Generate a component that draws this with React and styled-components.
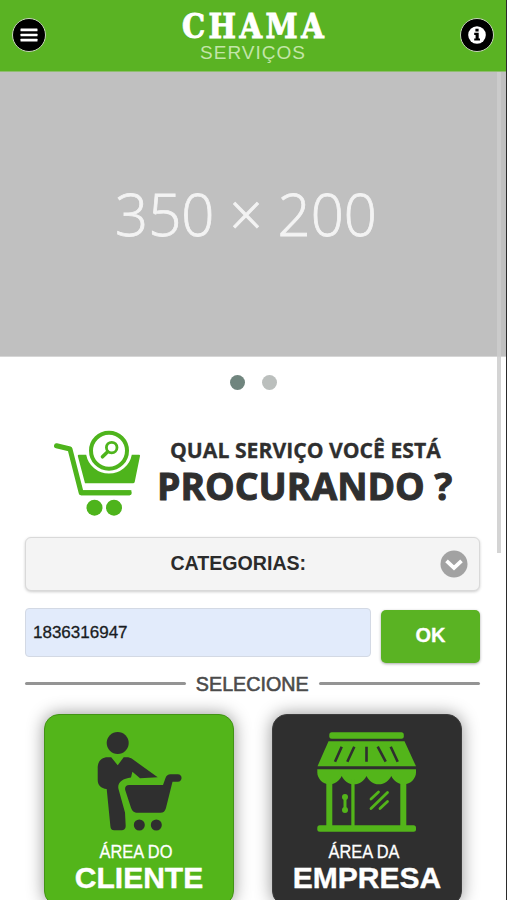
import React from "react";
import styled, { createGlobalStyle } from "styled-components";

const GlobalStyle = createGlobalStyle`
  * {
    box-sizing: border-box;
  }

  body {
    margin: 0;
    overflow: hidden;
    background: #fff;
    font-family: "Liberation Sans", Arial, sans-serif;
  }
`;

const Screen = styled.div`
  position: relative;
  height: 900px;
  overflow: hidden;
  border-right: 1px solid #2b2b2b;
`;

const Header = styled.header`
  height: 72px;
  padding: 0 12px 1px;
  display: flex;
  align-items: center;
  justify-content: space-between;
  background-color: #5ab323;
  border-bottom: 1px solid #8fbd70;
`;

const RoundButton = styled.button`
  width: 34px;
  height: 34px;
  padding: 0;
  display: flex;
  align-items: center;
  justify-content: center;
  border: 1px solid #c5d8b6;
  border-radius: 50%;
  background-color: #000;
`;

const Brand = styled.div`
  height: 70px;
  padding: 11px 1px 0 0;
  display: flex;
  flex-direction: column;
  align-items: center;
`;

// text whose glyphs are squeezed or widened sideways
const Label = styled.span`
  display: block;
  white-space: nowrap;
  font-family: ${(props) => props.$font || `"Liberation Sans", sans-serif`};
  font-size: ${(props) => props.$size}px;
  font-weight: ${(props) => props.$weight || 400};
  line-height: ${(props) => props.$line}px;
  letter-spacing: ${(props) => props.$spacing || 0}px;
  margin-right: -${(props) => props.$spacing || 0}px;
  color: ${(props) => props.$color || "#fff"};
  transform: scaleX(${(props) => props.$stretch || 1});
  transform-origin: ${(props) => props.$origin || "center"};
  -webkit-text-stroke: ${(props) => props.$stroke || 0}px currentColor;
`;

const Slide = styled.div`
  height: 285px;
  padding-right: 14px;
  display: flex;
  align-items: center;
  justify-content: center;
  background-color: #c0c0c0;
  border-bottom: 1px solid #d6d6d6;
`;

const Dots = styled.div`
  height: 51px;
  display: flex;
  align-items: center;
  justify-content: center;
  gap: 17px;
`;

const Dot = styled.span`
  width: 15px;
  height: 15px;
  border-radius: 50%;
  background-color: ${(props) => (props.$active ? "#70857e" : "#bbbfbd")};
`;

const Question = styled.section`
  height: 129px;
  padding: 22px 0 0 53px;
  display: flex;
`;

const QuestionText = styled.div`
  padding: 4px 0 0 16px;
`;

const FirstLine = styled.div`
  padding-left: 13px;
`;

const Form = styled.main`
  padding: 0 26px 0 25px;
`;

const Select = styled.button`
  width: 100%;
  height: 54px;
  padding: 0 11px;
  display: flex;
  align-items: center;
  border: 1px solid #d9d9d9;
  border-radius: 6px;
  background-color: #f4f4f4;
  box-shadow: 0 1px 3px rgba(0, 0, 0, 0.2);
`;

const SelectText = styled.div`
  flex: 1;
  padding-bottom: 2px;
  display: flex;
  justify-content: center;
`;

const Row = styled.div`
  margin-top: 17px;
  display: flex;
  align-items: flex-start;
  gap: 10px;
`;

const Input = styled.input`
  width: 346px;
  height: 49px;
  padding: 0 7px;
  border: 1px solid #d3d9e4;
  border-radius: 4px;
  outline: none;
  background-color: #e2ebfb;
  color: #191c22;
  font-family: "Liberation Sans", sans-serif;
  font-size: 17px;
  -webkit-text-stroke: 0.3px #191c22;
`;

const OkButton = styled.button`
  flex: 1;
  height: 53px;
  margin-top: 2px;
  padding: 0 0 3px;
  border: 0;
  border-radius: 5px;
  background-color: #5ab323;
  box-shadow: 0 1px 3px rgba(0, 0, 0, 0.35);
`;

const Divider = styled.div`
  height: 42px;
  padding-bottom: 1px;
  display: flex;
  align-items: center;
  gap: 9px;

  &::before,
  &::after {
    content: "";
    flex: 1;
    height: 3px;
    border-radius: 2px;
    background-color: #949494;
  }
`;

const Cards = styled.div`
  padding: 9px 18px 0 19px;
  display: flex;
  justify-content: space-between;
`;

const Card = styled.a`
  width: 190px;
  height: 192px;
  padding-top: 17px;
  display: flex;
  flex-direction: column;
  align-items: center;
  border: 1px solid ${(props) => (props.$dark ? "#3c3c3c" : "#429315")};
  border-radius: 15px;
  background-color: ${(props) => (props.$dark ? "#2f2f2f" : "#53b51a")};
  box-shadow: 0 0 17px rgba(0, 0, 0, 0.42);

  svg {
    flex: none;
    margin-bottom: 10px;
  }
`;

const CardCaption = styled.div`
  padding-right: 5px;
`;

const Scrollbar = styled.div`
  position: absolute;
  top: 72px;
  right: 5px;
  width: 4px;
  height: 481px;
  background-color: rgba(205, 205, 205, 0.85);
`;

function MenuIcon() {
  return (
    <svg width="18" height="14" viewBox="0 0 18 14" fill="#fff">
      <rect x="0.5" y="0.6" width="17" height="2.6" rx="0.5" />
      <rect x="0.5" y="5.7" width="17" height="2.6" rx="0.5" />
      <rect x="0.5" y="10.8" width="17" height="2.6" rx="0.5" />
    </svg>
  );
}

function InfoIcon() {
  return (
    <svg width="18" height="18" viewBox="0 0 18 18">
      <circle cx="9" cy="9" r="8.8" fill="#fff" />
      <path d="M7.4 2.8h3.2v2.7H7.4zM6.2 6.8h4.5v5.6h1.3v2.1H6.2v-2.1h1.4V8.9H6.2z" />
    </svg>
  );
}

function SearchCartIcon() {
  return (
    <svg width="88" height="88" viewBox="0 0 88 88" fill="none">
      <path
        d="M3.500 15.800l13.500 3.200 11.200 43.800h48"
        stroke="#4eb41c"
        strokeWidth="5"
        strokeLinecap="round"
        strokeLinejoin="round"
      />
      <path d="M28 60.300h50.500l-1.500 5H28z" fill="#4eb41c" />
      <path
        d="M26 24.700h7.200a23.200 23.200 0 0 0 45.600 0H86q1.300 0 1 1.300l-5.300 26q-.4 1.300-1.700 1.300H32L24.800 26q-.2-1.300 1.200-1.300z"
        fill="#4eb41c"
      />
      <circle cx="56" cy="20.700" r="18" fill="#fff" stroke="#4eb41c" strokeWidth="4" />
      <circle cx="58.700" cy="17.600" r="5.300" stroke="#4eb41c" strokeWidth="2.800" />
      <path d="M54.700 21.800l-5.200 5" stroke="#4eb41c" strokeWidth="3.600" strokeLinecap="round" />
      <circle cx="41.500" cy="77.700" r="8" fill="#4eb41c" />
      <circle cx="61" cy="77.700" r="8" fill="#4eb41c" />
    </svg>
  );
}

function ChevronIcon() {
  return (
    <svg width="28" height="28" viewBox="0 0 28 28" fill="none">
      <circle cx="14" cy="14" r="13.500" fill="#a2a2a2" />
      <path d="M6.500 10.800l7.500 7 7.500-7" stroke="#fff" strokeWidth="3.800" />
    </svg>
  );
}

function ClientIcon() {
  return (
    <svg width="86" height="100" viewBox="0 0 86 100" fill="#2f2f2f">
      <circle cx="21.700" cy="11" r="11" />
      <path d="M1.700 36c0-7 4-10.700 10-10.700h3.500l6.500 8 6-8h3c2 0 4 .5 6 2L61.700 45.300 44 46.200l-7.600-6.500L35 45.500c-9 1-14 5.500-12.500 11.500l6.500 23.500.7 13.500c0 3-2 4.300-4 4.300h-7.500c-2.500 0-3.600-1.500-3.800-4L10.700 57C5 56.500 1.700 53 1.700 48z" />
      <path d="M29.200 58c-.6-3 .8-5 4-5H67l2.500-7c1-2.500 2.500-3.700 5-3.700h7.300c5 0 5 7.400 0 7.400h-5.300l-6.600 26.500c-1 3.300-2.500 4.600-5.500 4.600H42c-4 0-6-2-7-5z" />
      <circle cx="43.300" cy="93" r="5.500" />
      <circle cx="60.300" cy="93" r="5.500" />
    </svg>
  );
}

function StoreIcon() {
  return (
    <svg width="100" height="100" viewBox="0 0 100 100" fill="#53b51a">
      <rect x="12.300" y="0.300" width="74.500" height="6.500" rx="2.500" />
      <path d="M11.500 9.300h76L99 34.300H.5z" />
      <path
        d="M24.700 14.700l-6.700 15M37.300 14.700l-7 15M49.500 14.700v15M60.700 14.700l8 15M73.700 14.700l7 15"
        stroke="#2f2f2f"
        strokeWidth="2.600"
      />
      <path d="M.3 37.300h98.700v3.200c0 6-5.500 11.800-12 11.800-5.500 0-10.500-3.600-12.700-8.300-2.300 4.700-7 8.300-12.500 8.300S51.800 48.700 49.500 44c-2.300 4.700-7 8.300-12.500 8.300S27 48.700 24.700 44c-2.200 4.700-7 8.300-12.500 8.300C5.800 52.300.3 46.500.3 40.500z" />
      <path d="M9.300 48h6v46h-6zM34.300 47h3.300v47h-3.300zM83.300 48h6v46h-6z" />
      <rect x="0.300" y="93.300" width="98.700" height="6.500" rx="2.500" />
      <path d="M28 65v14" stroke="#53b51a" strokeWidth="3" />
      <circle cx="28" cy="65" r="3" />
      <circle cx="28" cy="78" r="3" />
      <path
        d="M54 67l7.500-7M54 76.500l16.500-16M63 76.500l7.500-7"
        stroke="#53b51a"
        strokeWidth="2.800"
        strokeLinecap="round"
      />
    </svg>
  );
}

const openSans = `"Open Sans", "Noto Sans", sans-serif`;

function App() {
  return (
    <>
      <GlobalStyle />
      <Screen>
        <Header>
          <RoundButton aria-label="Menu">
            <MenuIcon />
          </RoundButton>
          <Brand>
            <Label
              $font={`"DejaVu Serif", serif`}
              $size={33}
              $weight={700}
              $line={32}
              $spacing={4}
              $stretch={0.88}
              $stroke={1}
            >
              CHAMA
            </Label>
            <Label $size={19} $line={20} $spacing={1} $color="#c3e5a9">
              SERVIÇOS
            </Label>
          </Brand>
          <RoundButton aria-label="Info">
            <InfoIcon />
          </RoundButton>
        </Header>
        <Slide>
          <Label $font={openSans} $size={58} $weight={300} $line={62} $stroke={0.8} $color="#f3f3f3">
            350 × 200
          </Label>
        </Slide>
        <Dots>
          <Dot $active />
          <Dot />
        </Dots>
        <Question>
          <SearchCartIcon />
          <QuestionText>
            <FirstLine>
              <Label
                $font={openSans}
                $size={22}
                $weight={700}
                $line={30}
                $color="#2f2f2f"
                $stretch={0.962}
                $origin="left"
                $stroke={0.3}
              >
                QUAL SERVIÇO VOCÊ ESTÁ
              </Label>
            </FirstLine>
            <Label
              $font={openSans}
              $size={38}
              $weight={700}
              $line={42}
              $color="#2f2f2f"
              $stretch={0.982}
              $origin="left"
              $stroke={1}
            >
              PROCURANDO ?
            </Label>
          </QuestionText>
        </Question>
        <Form>
          <Select>
            <SelectText>
              <Label $size={20} $weight={700} $line={24} $color="#2b2b2b" $stretch={0.98}>
                CATEGORIAS:
              </Label>
            </SelectText>
            <ChevronIcon />
          </Select>
          <Row>
            <Input defaultValue="1836316947" />
            <OkButton>
              <Label $size={20} $weight={700} $line={24} $stroke={0.3}>
                OK
              </Label>
            </OkButton>
          </Row>
          <Divider>
            <Label $size={20} $line={24} $color="#4b4b4b" $stretch={0.985} $stroke={0.6}>
              SELECIONE
            </Label>
          </Divider>
          <Cards>
            <Card>
              <ClientIcon />
              <CardCaption>
                <Label $size={18} $line={21} $stretch={0.91} $stroke={0.3}>
                  ÁREA DO
                </Label>
              </CardCaption>
              <Label $size={30} $weight={700} $line={30} $stroke={0.4}>
                CLIENTE
              </Label>
            </Card>
            <Card $dark>
              <StoreIcon />
              <CardCaption>
                <Label $size={18} $line={21} $stretch={0.91} $stroke={0.3}>
                  ÁREA DA
                </Label>
              </CardCaption>
              <Label $size={30} $weight={700} $line={30} $stroke={0.4}>
                EMPRESA
              </Label>
            </Card>
          </Cards>
        </Form>
        <Scrollbar />
      </Screen>
    </>
  );
}

export default App;
